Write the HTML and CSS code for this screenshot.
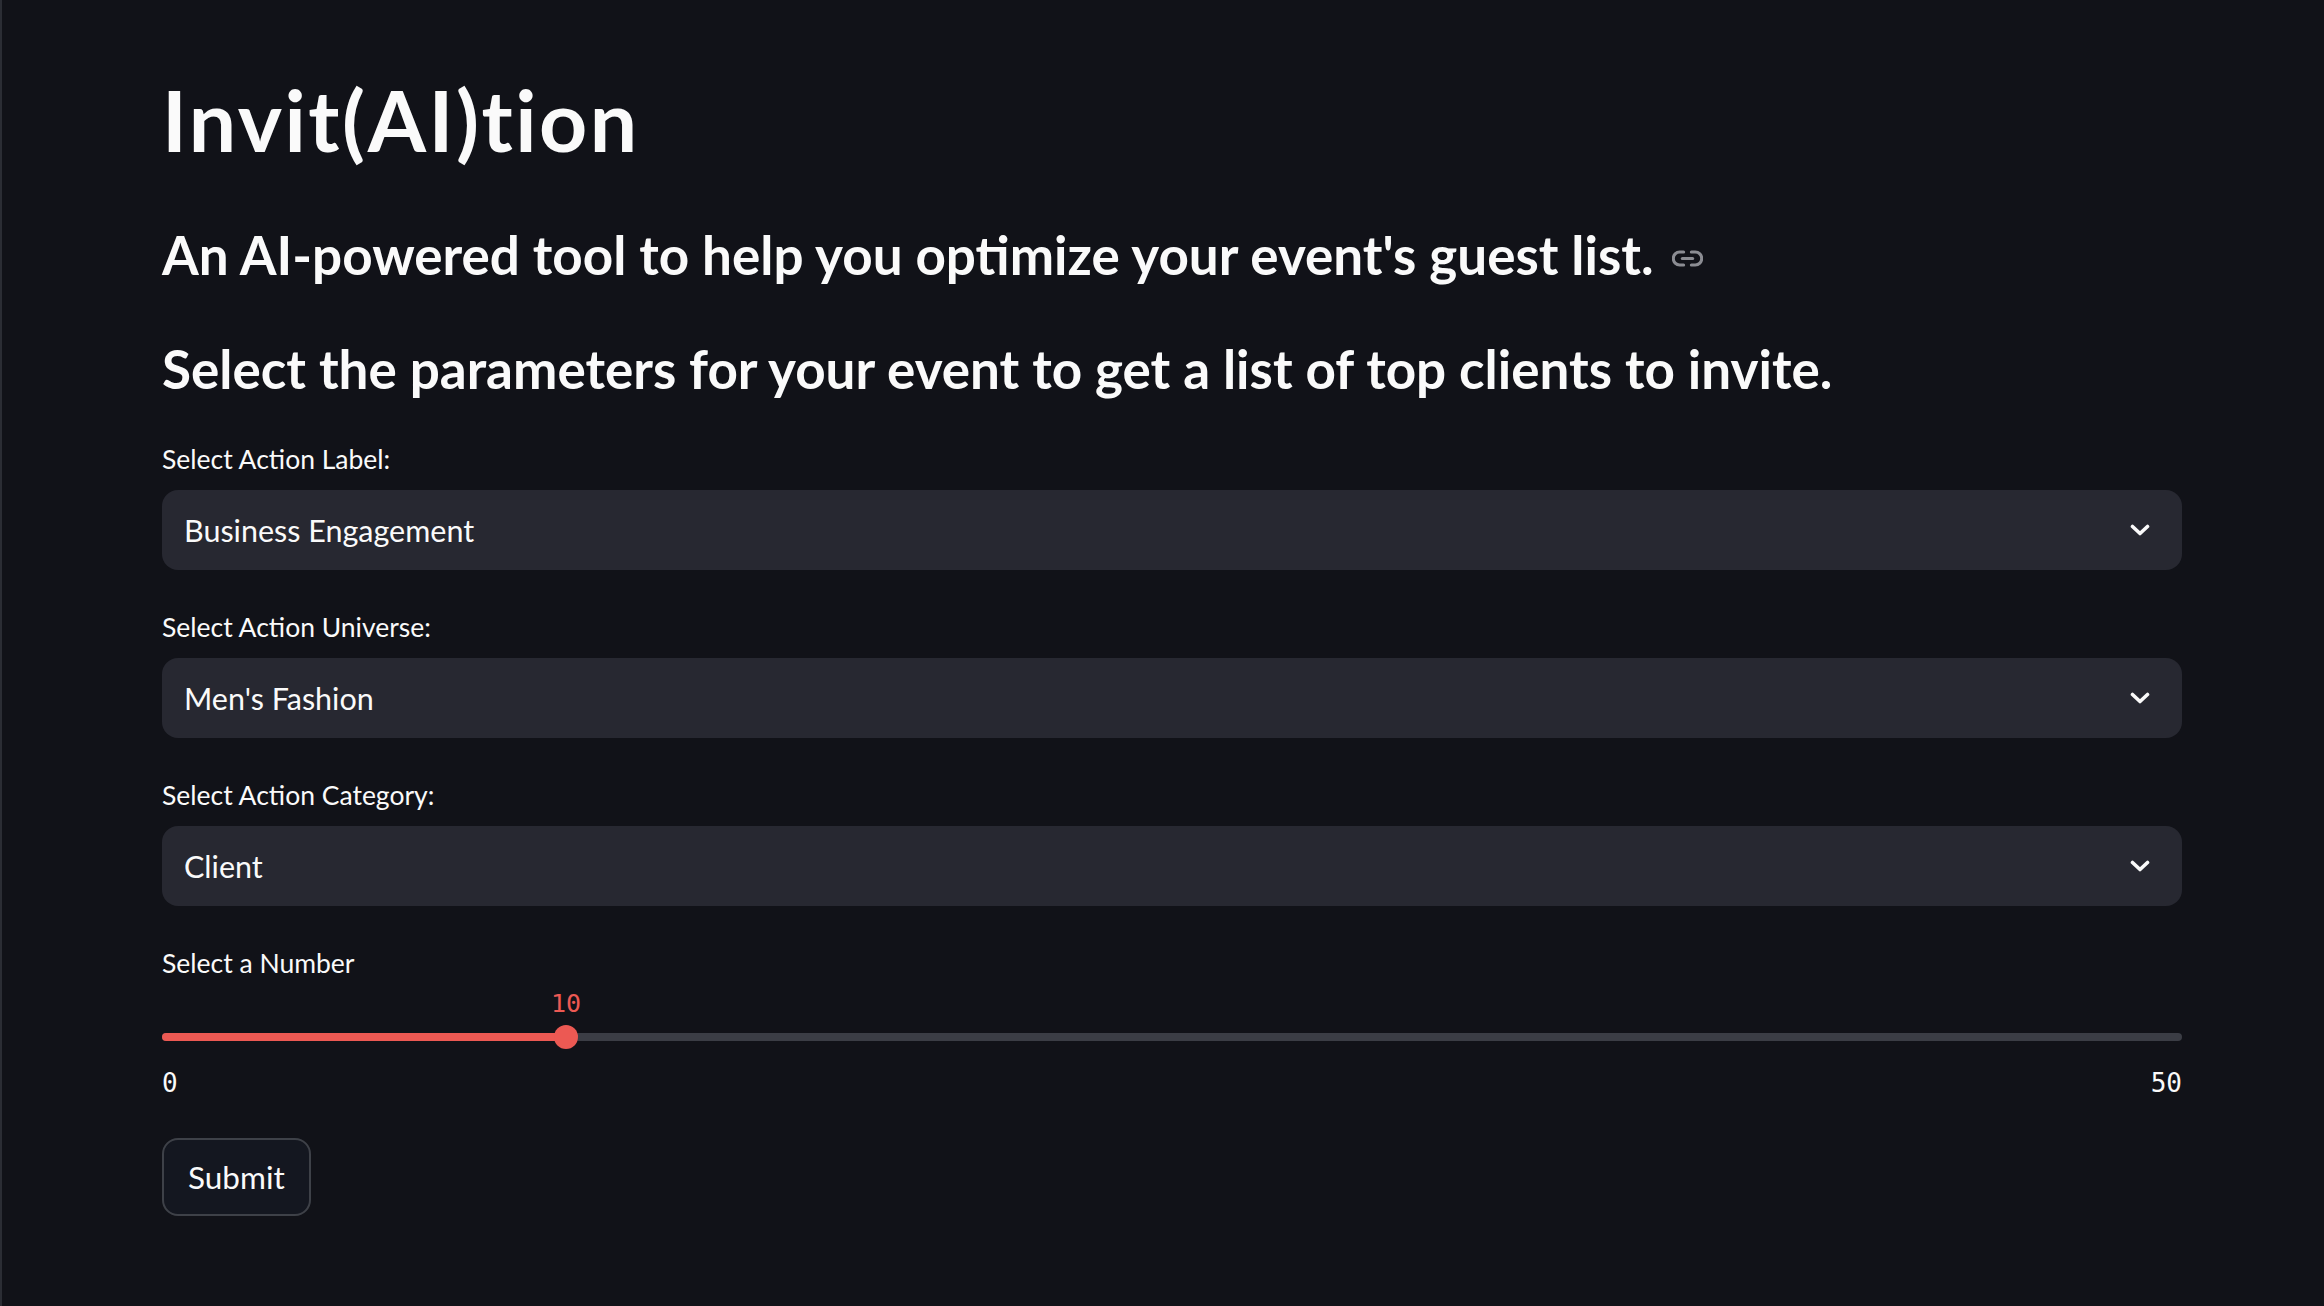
FILE: index.html
```html
<!DOCTYPE html>
<html lang="en">
<head>
<meta charset="utf-8">
<title>Invit(AI)tion</title>
<link rel="stylesheet" href="styles.css">
</head>
<body>
<main class="app">
  <h1 class="title">Invit(AI)tion</h1>
  <h3 class="heading heading-first">An AI-powered tool to help you optimize your event's guest list.<a class="anchor" href="#"><svg viewBox="0 0 24 24" width="31" height="31" fill="none" stroke="currentColor" stroke-width="2.4" stroke-linecap="round" stroke-linejoin="round"><path d="M15 7h3a5 5 0 0 1 5 5 5 5 0 0 1-5 5h-3m-6 0H6a5 5 0 0 1-5-5 5 5 0 0 1 5-5h3"/><line x1="8" y1="12" x2="16" y2="12"/></svg></a></h3>
  <h3 class="heading heading-second">Select the parameters for your event to get a list of top clients to invite.</h3>

  <div class="field">
    <label class="label">Select Action Label:</label>
    <div class="select"><span class="select-value">Business Engagement</span><svg class="chevron" viewBox="0 0 20 12" width="20" height="12"><polyline points="2.5,2.5 10,9.5 17.5,2.5" fill="none" stroke="#fafafa" stroke-width="3.6" stroke-linecap="round" stroke-linejoin="round"/></svg></div>
  </div>

  <div class="field">
    <label class="label">Select Action Universe:</label>
    <div class="select"><span class="select-value">Men's Fashion</span><svg class="chevron" viewBox="0 0 20 12" width="20" height="12"><polyline points="2.5,2.5 10,9.5 17.5,2.5" fill="none" stroke="#fafafa" stroke-width="3.6" stroke-linecap="round" stroke-linejoin="round"/></svg></div>
  </div>

  <div class="field">
    <label class="label">Select Action Category:</label>
    <div class="select"><span class="select-value">Client</span><svg class="chevron" viewBox="0 0 20 12" width="20" height="12"><polyline points="2.5,2.5 10,9.5 17.5,2.5" fill="none" stroke="#fafafa" stroke-width="3.6" stroke-linecap="round" stroke-linejoin="round"/></svg></div>
  </div>

  <div class="field">
    <label class="label">Select a Number</label>
    <div class="slider">
      <div class="slider-value-row"><span class="slider-value" style="left:20%">10</span></div>
      <div class="slider-track-row">
        <div class="track"><div class="track-fill" style="width:20%"></div></div>
        <div class="thumb" style="left:20%"></div>
      </div>
      <div class="ticks"><span>0</span><span>50</span></div>
    </div>
  </div>

  <button class="btn" type="button">Submit</button>
</main>
</body>
</html>
```

FILE: styles.css
```css
html, body {
  margin: 0;
  padding: 0;
  background: #111218;
}

body {
  font-family: "Lato", "Noto Sans", sans-serif;
  color: #fafafa;
}

.app {
  min-height: 1306px;
  box-sizing: border-box;
  border-left: 2px solid #2b2d34;
  padding: 70px 142px 0 160px;
  display: flex;
  flex-direction: column;
  align-items: stretch;
}

.title {
  margin: 0;
  font-size: 84px;
  line-height: 100px;
  font-weight: 700;
  letter-spacing: 2.5px;
}

.heading {
  margin: 0;
  font-size: 53px;
  line-height: 64px;
  font-weight: 700;
  letter-spacing: 0;
  display: flex;
  align-items: center;
}

.heading-first {
  margin-top: 53px;
}

.heading-second {
  margin-top: 50px;
}

.anchor {
  color: #8b8c92;
  margin-left: 18px;
  display: inline-flex;
  align-items: center;
  padding-top: 6px;
}

.field {
  margin-top: 42px;
  display: flex;
  flex-direction: column;
}

.heading-second + .field {
  margin-top: 43px;
}

.label {
  font-size: 26.5px;
  line-height: 30px;
  font-weight: 400;
  color: #fafafa;
}

.select {
  margin-top: 16px;
  height: 80px;
  box-sizing: border-box;
  background: #272831;
  border-radius: 16px;
  padding: 0 32px 0 22px;
  display: flex;
  align-items: center;
  justify-content: space-between;
}

.select-value {
  font-size: 30.5px;
  line-height: 40px;
  color: #fafafa;
}

.chevron {
  display: block;
}

.slider {
  display: flex;
  flex-direction: column;
}

.slider-value-row {
  position: relative;
  height: 47px;
}

.slider-value {
  position: absolute;
  top: 11px;
  transform: translateX(-50%);
  font-family: "DejaVu Sans Mono", "Liberation Mono", monospace;
  font-size: 25px;
  line-height: 30px;
  color: #ec5953;
}

.slider-track-row {
  position: relative;
  height: 24px;
  display: flex;
  align-items: center;
}

.track {
  flex: 1;
  height: 8px;
  border-radius: 4px;
  background: #3b3d45;
  overflow: hidden;
}

.track-fill {
  height: 100%;
  background: #ec5953;
}

.thumb {
  position: absolute;
  top: 0;
  width: 24px;
  height: 24px;
  border-radius: 50%;
  background: #ec5953;
  transform: translateX(-50%);
}

.ticks {
  margin-top: 20px;
  display: flex;
  justify-content: space-between;
  font-family: "DejaVu Sans Mono", "Liberation Mono", monospace;
  font-size: 26px;
  line-height: 28px;
  color: #fafafa;
}

.btn {
  align-self: flex-start;
  margin-top: 41px;
  height: 78px;
  box-sizing: border-box;
  padding: 0 24px;
  background: #141720;
  border: 2px solid #3e4148;
  border-radius: 16px;
  color: #fafafa;
  font-family: "Lato", "Noto Sans", sans-serif;
  font-size: 31.5px;
  font-weight: 400;
}
```
